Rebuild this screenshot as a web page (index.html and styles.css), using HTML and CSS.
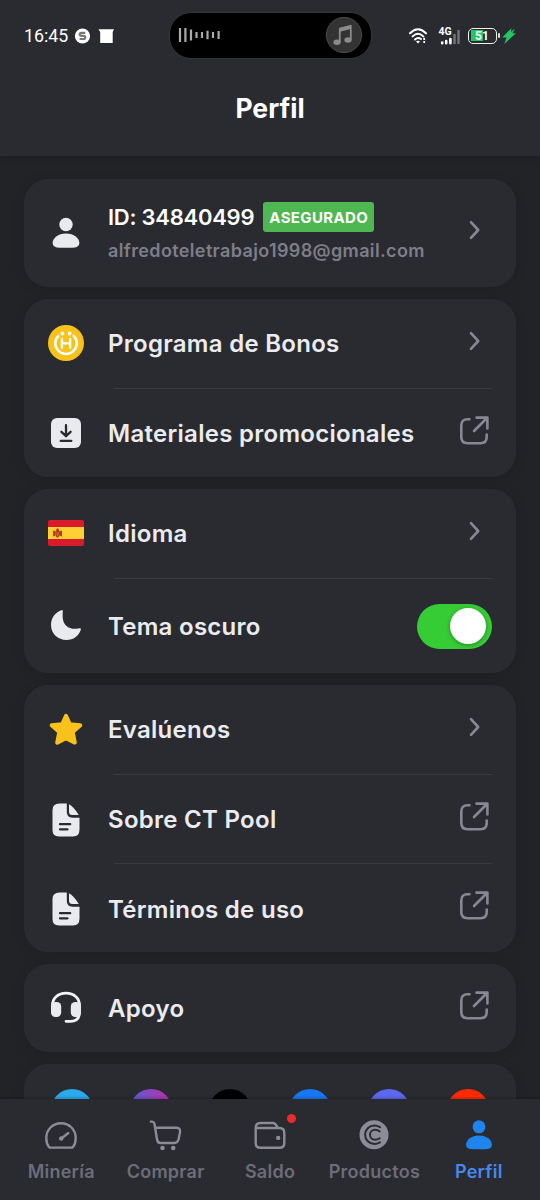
FILE: index.html
```html
<!DOCTYPE html>
<html lang="es">
<head>
<meta charset="utf-8">
<title>Perfil</title>
<link rel="stylesheet" href="styles.css">
</head>
<body>
<svg width="0" height="0" class="defs">
  <symbol id="chevron" viewBox="0 0 36 36"><path d="M15 10.2 22.2 18 15 25.8"/></symbol>
  <symbol id="external" viewBox="0 0 36 36"><path d="M13.5 6.3H11.5Q5.3 6.3 5.3 12.5V24Q5.3 30.2 11.5 30.2H24.5Q30.7 30.2 30.7 24V21.5M20.5 4.6H31.4V15.5M31 5 18 18"/></symbol>
  <symbol id="doc" viewBox="0 0 36 36"><path fill="#e9eaed" d="M11.5 1.5H18.8V10Q18.8 15.7 24.5 15.7H31.5V27.5Q31.5 34.5 25 34.5H11Q4.5 34.5 4.5 28V8Q4.5 1.5 11.5 1.5Z"/><path fill="#e9eaed" d="M21 2.2Q25.5 4.5 30.8 13H24.2Q21 13 21 9.5Z"/><path d="M12 22.2H22.2M12 27.3H19.5" stroke="#2a2b30" stroke-width="2.3" stroke-linecap="round"/></symbol>
  <symbol id="user" viewBox="0 0 36 36"><circle cx="18" cy="9.5" r="6.7"/><path d="M18 18.5C26 18.5 31.4 23.2 31.4 28Q31.4 32.8 24 32.8H12Q4.6 32.8 4.6 28C4.6 23.2 10 18.5 18 18.5Z"/></symbol>
</svg>
<div class="screen">
  <header class="header">
    <div class="status">
      <span class="clock">16:45</span>
      <svg class="note-icons" width="40" height="20" viewBox="0 0 40 20"><circle cx="7.5" cy="10" r="7.6" fill="#fff"/><path d="M10.3 6.8H6.3Q4.8 6.8 4.8 8.3Q4.8 9.8 6.3 9.8H8.8Q10.2 9.8 10.2 11.3Q10.2 13 8.8 13H4.6" fill="none" stroke="#777" stroke-width="2.2"/><path d="M23.5 3.3H39L37.7 6V17H25.2V6Z" fill="#fff"/></svg>
      <div class="island">
        <svg width="44" height="18" viewBox="0 0 44 18"><path d="M2 2V16M7.4 2V16M13 3.5V14.5M18.5 6V12M24 6V12M29.5 4.7V13.3M35 6V12M40.6 5V13" stroke="#aaa" stroke-width="2.2"/></svg>
        <svg width="38" height="38" viewBox="0 0 38 38"><circle cx="19" cy="19" r="17.6" fill="#333" stroke="#4b4b4b"/><path d="M14.8 26V12.6L25.8 10V23.8" fill="none" stroke="#8b8b8b" stroke-width="1.8"/><path d="M14.8 12V15.7L25.8 13V9Z" fill="#8b8b8b"/><ellipse cx="12" cy="26.2" rx="3.6" ry="2.7" fill="#8b8b8b"/><ellipse cx="23" cy="24" rx="3.6" ry="2.7" fill="#8b8b8b"/></svg>
      </div>
      <div class="signals">
        <svg width="18" height="16" viewBox="0 0 18 16"><g fill="none" stroke="#fff" stroke-width="2" stroke-linecap="round"><path d="M1 5.2Q9-2.7 17 5.2M3.6 8.4Q9 3.2 14.3 8.4M6 11.5Q9 8.8 12 11"/></g><path d="M7 13.4Q9 12 11 13.4L9 15.6Z" fill="#fff"/><path d="M15.2 9.8V12M15.2 13V15" stroke="#fff" stroke-width="1.8"/></svg>
        <div class="cell"><b>4G</b><svg width="22" height="17" viewBox="0 0 22 17"><path d="M3.2 15.3V14.5M7.2 15.3V13M11.4 15.3V11" stroke="#fff" stroke-width="2.6" stroke-linecap="round"/><path d="M15.5 16V6M19.5 16V2" stroke="#77787b" stroke-width="2.3"/></svg></div>
        <div class="battery"><span>51</span></div>
        <svg class="bolt" width="14" height="16" viewBox="0 0 14 16"><path d="M9.5 0 .3 9.6H4.6L2.3 16 13.9 5.2H10.6L12.8.5 8.8 4Z" fill="#20c763"/></svg>
      </div>
    </div>
    <h1>Perfil</h1>
  </header>

  <main class="content">
    <section class="card account">
      <svg class="icon person"><use href="#user"/></svg>
      <div class="account-text">
        <div class="account-id"><span class="id">ID: 34840499</span><span class="badge">ASEGURADO</span></div>
        <div class="email">alfredoteletrabajo1998@gmail.com</div>
      </div>
      <svg class="action"><use href="#chevron"/></svg>
    </section>

    <section class="card">
      <div class="row">
        <svg class="icon" viewBox="0 0 36 36"><circle cx="18" cy="18" r="18" fill="#f8c21b"/><g fill="none" stroke="#fff" stroke-width="2.5" stroke-linecap="round"><path d="M10.3 10.8A10.7 10.7 0 1 0 25.7 10.8" /><path d="M13.9 13.8V22.8M22.1 13.8V22.8M13.9 18.3H22.1" stroke-width="2.3"/></g><circle cx="14.4" cy="8.5" r="1.9" fill="#fff"/><circle cx="21.6" cy="8.5" r="1.9" fill="#fff"/></svg>
        <span class="label">Programa de Bonos</span>
        <svg class="action"><use href="#chevron"/></svg>
      </div>
      <div class="row">
        <svg class="icon" viewBox="0 0 36 36"><rect x="3" y="3" width="30" height="30" rx="6" fill="#e9eaed"/><path d="M18 10.2V20.5M13.4 16.8 18 21.2 22.6 16.8M12.7 25.9H23.3" fill="none" stroke="#2a2b30" stroke-width="2.3" stroke-linecap="round" stroke-linejoin="round"/></svg>
        <span class="label">Materiales promocionales</span>
        <svg class="action"><use href="#external"/></svg>
      </div>
    </section>

    <section class="card language">
      <div class="row">
        <svg class="icon" viewBox="0 0 36 36"><rect y="5" width="36" height="26" rx="2" fill="#d91b2c"/><path fill="#ffd034" d="M0 12H36V24H0Z"/><path d="M6 15.8V21.3M13 15.8V21.3" stroke="#a52b1b" stroke-width="1.7"/><path d="M7.8 16.3H11.4V19.5Q11 22 9.6 22.3Q7.8 22 7.8 19Z" fill="#c8641d" stroke="#ae281a" stroke-width="1"/><path d="M8.2 15H11M9.6 13.6V16" stroke="#ae281a" stroke-width="1.4"/></svg>
        <span class="label">Idioma</span>
        <svg class="action"><use href="#chevron"/></svg>
      </div>
      <div class="row theme">
        <svg class="icon" viewBox="0 0 36 36"><path fill="#e9eaed" d="M13.3 2.2Q14.9 1.7 14.8 3.5C14.3 9.8 14.8 14.5 18.3 17.7C21.8 21 26.5 21.3 31.6 20.2Q33.5 19.9 32.8 21.7C30.7 28 25.5 32 18.5 32C9.8 32 3 25.5 3 17C3 10 7.2 4.2 13.3 2.2Z"/></svg>
        <span class="label">Tema oscuro</span>
        <span class="toggle"><i></i></span>
      </div>
    </section>

    <section class="card about">
      <div class="row">
        <svg class="icon" viewBox="0 0 36 36"><path d="M18 4.8 21.8 13.2 32.3 14.2 24.7 21 26.8 31.6 18 27.2 9.2 31.6 11.3 21 3.7 14.2 14.2 13.2Z" fill="#f8c21b" stroke="#f8c21b" stroke-width="4" stroke-linejoin="round"/></svg>
        <span class="label">Evalúenos</span>
        <svg class="action"><use href="#chevron"/></svg>
      </div>
      <div class="row">
        <svg class="icon"><use href="#doc"/></svg>
        <span class="label">Sobre CT Pool</span>
        <svg class="action"><use href="#external"/></svg>
      </div>
      <div class="row">
        <svg class="icon"><use href="#doc"/></svg>
        <span class="label">Términos de uso</span>
        <svg class="action"><use href="#external"/></svg>
      </div>
    </section>

    <section class="card support">
      <div class="row">
        <svg class="icon" viewBox="0 0 36 36"><path d="M4.5 18V16.5C4.5 9 10.2 4.2 18 4.2S31.5 9 31.5 16.5V23Q31.5 32.3 22.5 32.3H18" fill="none" stroke="#f3f3f5" stroke-width="2.8" stroke-linecap="round"/><rect x="3" y="13" width="10.2" height="15" rx="4.5" fill="#e9eaed"/><rect x="22.8" y="13" width="10.2" height="15" rx="4.5" fill="#e9eaed"/></svg>
        <span class="label">Apoyo</span>
        <svg class="action"><use href="#external"/></svg>
      </div>
    </section>

    <section class="card social">
      <i class="telegram"></i><i class="viber"></i><i class="x"></i><i class="facebook"></i><i class="discord"></i><i class="reddit"></i>
    </section>
  </main>

  <nav class="tabs">
    <a class="tab"><svg viewBox="0 0 36 36"><path d="M6 30C3.5 27 3.3 24.5 3.3 21C3.3 12.7 9.6 6.2 18 6.2S32.7 12.7 32.7 21C32.7 24.5 32.5 27 30 30Q29.3 30.6 28 30.6H8Q6.7 30.6 6 30ZM19 21 25.3 16"/><circle class="fill" cx="18.2" cy="21.5" r="2.2"/></svg><span>Minería</span></a>
    <a class="tab"><svg viewBox="0 0 36 36"><path d="M2.8 4.6H4.2Q6 4.8 6.5 7L9 22.5Q9.5 26 12.5 26H26.5Q29.5 26 30.5 22.5L32 15.6Q32.8 10.8 28.5 10.8H7"/><g class="fill"><circle cx="14.5" cy="31" r="2.3"/><circle cx="25.2" cy="31" r="2.3"/></g></svg><span>Comprar</span></a>
    <a class="tab wallet"><svg viewBox="0 0 36 36"><path d="M25.5 10.8Q24 6 20.5 6H8.5Q3.7 6 3.7 10.8V26Q3.7 30.8 8.5 30.8H27.5Q32.3 30.8 32.3 26V15.8Q32.3 11 27.5 11H4.5"/><circle class="fill" cx="26.2" cy="20.9" r="2.2"/></svg><em></em><span>Saldo</span></a>
    <a class="tab"><svg viewBox="0 0 36 36"><circle class="fill" cx="18" cy="17.8" r="14.5"/><g class="mark"><path d="M24 10.2Q21 8.6 18.3 8.6A9.2 9.2 0 0 0 18.3 27Q21 27 24 25.3M23.7 14.4Q21.5 12.8 19 12.8A5 5 0 0 0 19 22.8Q21.5 22.8 23.7 21.2"/></g></svg><span>Productos</span></a>
    <a class="tab active"><svg viewBox="-0.7 -0.7 37.4 37.4"><use href="#user" width="36" height="36"/></svg><span>Perfil</span></a>
  </nav>
</div>
</body>
</html>
```
FILE: styles.css
```css
* { box-sizing: border-box; }
body { margin: 0; background: #222327; color: #ebecf0; font-family: Inter, "Liberation Sans", sans-serif; }
.defs { display: block; }
.screen { height: 1200px; display: flex; flex-direction: column; overflow: hidden; }

.header { flex: none; height: 156px; background: #2a2b30; box-shadow: 0 1px 8px rgba(0,0,0,.2); }
.status { height: 71px; display: grid; grid-template-columns: auto 1fr 203px 168.5px; align-items: center; padding-left: 24px; }
.clock { font: 400 17.8px/20px Roboto, sans-serif; color: #fff; }
.note-icons { margin-left: 7px; }
.island { height: 47px; margin-top: -1px; background: #000; border: 1px solid #35363a; border-radius: 22px; display: flex; align-items: center; justify-content: space-between; padding: 0 8px 0 8px; }
.signals { display: flex; align-items: center; padding-left: 37px; }
.cell { width: 22px; height: 18px; margin-left: 12px; position: relative; display: flex; align-items: flex-end; }
.cell b { position: absolute; top: 0; left: 0; font: 700 10.5px/10px Roboto, sans-serif; color: #fff; }
.battery { margin-left: 7px; width: 29px; height: 16px; border: 1.5px solid #eee; border-radius: 5px; padding: 1px 0 0; font: 700 12px/12px Roboto, sans-serif; color: #fff; text-align: center; background: linear-gradient(90deg, #20c763 12px, transparent 12px) 2px 1.5px / 23px 11px no-repeat; position: relative; }
.battery::after { content: ""; position: absolute; right: -4px; top: 4px; width: 2px; height: 5px; background: #ddd; border-radius: 1px; }
.bolt { margin-left: 5px; }
h1 { margin: 21px 0 0; font-size: 26.5px; line-height: 33px; font-weight: 700; text-align: center; color: #fff; }

.content { flex: 1; min-height: 0; overflow: hidden; padding: 22.5px 24px 0; display: flex; flex-direction: column; gap: 12px; }
.card { flex: none; background: #2a2b30; border-radius: 24px; padding: 0 24px; box-shadow: 0 2px 12px rgba(0,0,0,.13); }
.row { height: 89.2px; display: flex; align-items: center; position: relative; }
.row + .row { padding-top: 2px; }
.row + .row::before { content: ""; position: absolute; left: 66px; right: 0; top: 0; height: 1px; background: #3a3b40; }
.icon { flex: none; width: 36px; height: 36px; margin-right: 24px; }
.label { flex: 1; padding-top: 1.5px; font-size: 24px; line-height: 32px; font-weight: 600; letter-spacing: .28px; white-space: nowrap; }
.action { flex: none; width: 36px; height: 36px; margin-bottom: 5px; fill: none; stroke: #888895; stroke-width: 2.6; stroke-linecap: round; stroke-linejoin: round; }

.account { height: 108px; display: flex; align-items: center; }
.person { fill: #e9eaed; }
.account-text { flex: 1; }
.account-id { display: flex; align-items: center; height: 30px; }
.id { font-size: 22px; font-weight: 600; letter-spacing: -.25px; color: #fff; white-space: nowrap; }
.badge { margin-left: 9px; width: 111px; height: 30px; border-radius: 3px; background: #4eb751; color: #fff; font-size: 15px; line-height: 31px; font-weight: 700; letter-spacing: .35px; text-align: center; }
.email { margin-top: 6px; font-size: 18px; line-height: 26px; font-weight: 600; color: #7e7e8a; letter-spacing: .37px; }

.language .row:first-child .icon { margin-top: -1px; }
.theme { height: 94.8px; }
.toggle { width: 75px; height: 45px; border-radius: 23px; background: #36cc36; display: flex; justify-content: flex-end; padding: 4px 6px 5px; }
.toggle i { width: 36px; height: 36px; border-radius: 50%; background: #fff; box-shadow: 0 1px 4px rgba(0,0,0,.35); }
.support .row { height: 88px; }
.support .icon { margin-top: -2px; }
.social { height: 88px; padding: 25px 27px 0; display: flex; justify-content: space-between; }
.social i { width: 42px; height: 42px; border-radius: 50%; }
.telegram { background: #2aa9eb; }
.viber { background: linear-gradient(90deg, #6557cf 15%, #b832ad 90%); }
.x { background: #000; }
.facebook { background: #1877f2; }
.discord { background: #5c68f1; }
.reddit { background: #ff2b00; }

.tabs { flex: none; height: 101px; padding: 18px 9px 0; background: #2a2b30; display: grid; grid-template-columns: repeat(5, 1fr); box-shadow: 0 -1px 3px rgba(0,0,0,.25); position: relative; }
.tab { position: relative; display: flex; flex-direction: column; align-items: center; color: #6d6d7a; }
.tab svg { width: 36px; height: 36px; fill: none; stroke: #8c8c99; stroke-width: 2.4; stroke-linecap: round; stroke-linejoin: round; }
.tab .fill { fill: #8c8c99; stroke: none; }
.tab .mark { stroke: #2a2b30; stroke-width: 2; }
.tab span { margin-top: 7px; font-size: 18px; line-height: 24px; font-weight: 600; letter-spacing: .25px; }
.tab em { position: absolute; left: 50%; top: -3px; margin-left: 17px; width: 9px; height: 9px; border-radius: 50%; background: #e92c2c; }
.tab.active { color: #4788ef; }
.tab.active svg { fill: #2084ed; stroke: none; }
```
